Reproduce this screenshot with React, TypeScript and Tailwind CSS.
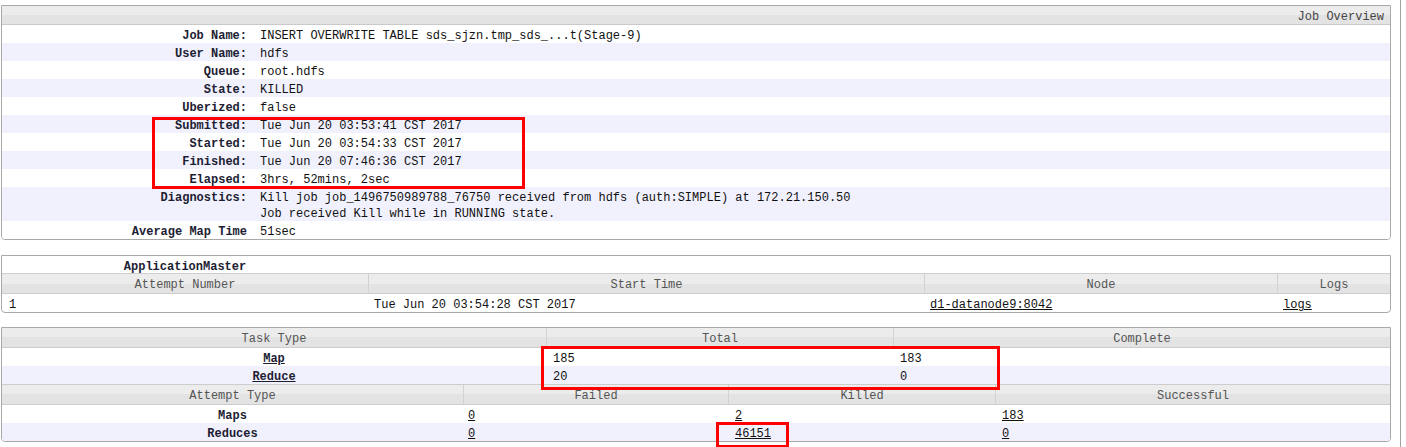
import React from 'react';

type Info = { label: string; value: React.ReactNode; lines?: number };

const info: Info[] = [
    { label: 'Job Name:', value: 'INSERT OVERWRITE TABLE sds_sjzn.tmp_sds_...t(Stage-9)' },
    { label: 'User Name:', value: 'hdfs' },
    { label: 'Queue:', value: 'root.hdfs' },
    { label: 'State:', value: 'KILLED' },
    { label: 'Uberized:', value: 'false' },
    { label: 'Submitted:', value: 'Tue Jun 20 03:53:41 CST 2017' },
    { label: 'Started:', value: 'Tue Jun 20 03:54:33 CST 2017' },
    { label: 'Finished:', value: 'Tue Jun 20 07:46:36 CST 2017' },
    { label: 'Elapsed:', value: '3hrs, 52mins, 2sec' },
    {
        label: 'Diagnostics:',
        value: (
            <>
                <div>Kill job job_1496750989788_76750 received from hdfs (auth:SIMPLE) at 172.21.150.50</div>
                <div>Job received Kill while in RUNNING state.</div>
            </>
        ),
        lines: 2,
    },
    { label: 'Average Map Time', value: '51sec' },
];

const headBg = 'bg-[linear-gradient(#ececec_0%,#ececec_50%,#e3e3e3_50%,#e3e3e3_100%)]';

function HeadCell({ children, w, first }: { children: React.ReactNode; w: string; first?: boolean }) {
    return (
        <div
            className={`${w} ${headBg} ${first ? '' : 'border-l border-[#d2d2d2]'} h-[19px] pt-[4px] text-center text-[12px] leading-[15px] text-[#555]`}
        >
            {children}
        </div>
    );
}

function Cell({ children, w, className = '' }: { children?: React.ReactNode; w: string; className?: string }) {
    return <div className={`${w} h-[18px] pt-[4px] leading-[14px] ${className}`}>{children}</div>;
}

function Panel({ children, className = '' }: { children: React.ReactNode; className?: string }) {
    return (
        <div className={`w-[1390px] overflow-hidden rounded-b-[4px] border border-[#a9a9a9] ${className}`}>{children}</div>
    );
}

function Box({ className }: { className: string }) {
    return <div className={`pointer-events-none absolute border-[3px] border-[#ff0000] ${className}`} />;
}

export default function App() {
    return (
        <div className="relative h-[447px] w-[1406px] overflow-hidden bg-white font-['Liberation_Mono',monospace] text-[12px] text-[#111]">
            <div className="h-full w-[1401px] border-r border-[#a3a3a3] pl-[1px] pt-[5px]">
                {/* Job overview */}
                <Panel>
                    <div className={`${headBg} h-[19px] border-b border-[#c9c9c9] pr-[6px] pt-[4px] text-right leading-[14px] text-[#444]`}>
                        Job Overview
                    </div>
                    {info.map((row, i) => (
                        <div
                            key={row.label}
                            className={`flex ${row.lines ? 'h-[34px] pt-[3px] leading-[16px]' : 'h-[18px] pt-[4px] leading-[14px]'} ${i % 2 ? 'bg-[#f1f1fe]' : 'bg-white'}`}
                        >
                            <div className="w-[251px] shrink-0 pr-[6px] text-right font-bold text-[#1d1d33]">{row.label}</div>
                            <div className="pl-[7px]">{row.value}</div>
                        </div>
                    ))}
                </Panel>

                {/* ApplicationMaster */}
                <Panel className="mt-[15px]">
                    <div className="flex h-[17px] pt-[4px] leading-[14px]">
                        <div className="w-[366px] text-center font-bold text-[#1d1d33]">ApplicationMaster</div>
                    </div>
                    <div className="flex border-y border-[#cdcdcd]">
                        <HeadCell w="w-[366px]" first>Attempt Number</HeadCell>
                        <HeadCell w="w-[556px]">Start Time</HeadCell>
                        <HeadCell w="w-[353px]">Node</HeadCell>
                        <HeadCell w="flex-1">Logs</HeadCell>
                    </div>
                    <div className="flex">
                        <Cell w="w-[366px]" className="pl-[7px]">1</Cell>
                        <Cell w="w-[556px]" className="pl-[6px]">Tue Jun 20 03:54:28 CST 2017</Cell>
                        <Cell w="w-[353px]" className="pl-[6px]"><span className="underline">d1-datanode9:8042</span></Cell>
                        <Cell w="flex-1" className="pl-[6px]"><span className="underline">logs</span></Cell>
                    </div>
                </Panel>

                {/* Tasks and attempts */}
                <Panel className="mt-[14px]">
                    <div className="flex border-b border-[#cdcdcd]">
                        <HeadCell w="w-[544px]" first>Task Type</HeadCell>
                        <HeadCell w="w-[347px]">Total</HeadCell>
                        <HeadCell w="flex-1">Complete</HeadCell>
                    </div>
                    <div className="flex bg-white">
                        <Cell w="w-[544px]" className="text-center font-bold text-[#1d1d33]"><span className="underline">Map</span></Cell>
                        <Cell w="w-[347px]" className="pl-[7px]">185</Cell>
                        <Cell w="flex-1" className="pl-[7px]">183</Cell>
                    </div>
                    <div className="flex bg-[#f1f1fe]">
                        <Cell w="w-[544px]" className="text-center font-bold text-[#1d1d33]"><span className="underline">Reduce</span></Cell>
                        <Cell w="w-[347px]" className="pl-[7px]">20</Cell>
                        <Cell w="flex-1" className="pl-[7px]">0</Cell>
                    </div>
                    <div className="flex border-y border-[#cdcdcd]">
                        <HeadCell w="w-[461px]" first>Attempt Type</HeadCell>
                        <HeadCell w="w-[265px]">Failed</HeadCell>
                        <HeadCell w="w-[267px]">Killed</HeadCell>
                        <HeadCell w="flex-1">Successful</HeadCell>
                    </div>
                    <div className="flex bg-white">
                        <Cell w="w-[461px]" className="text-center font-bold text-[#1d1d33]">Maps</Cell>
                        <Cell w="w-[265px]" className="pl-[5px]"><span className="underline">0</span></Cell>
                        <Cell w="w-[267px]" className="pl-[7px]"><span className="underline">2</span></Cell>
                        <Cell w="flex-1" className="pl-[7px]"><span className="underline">183</span></Cell>
                    </div>
                    <div className="flex bg-[#f1f1fe]">
                        <Cell w="w-[461px]" className="text-center font-bold text-[#1d1d33]">Reduces</Cell>
                        <Cell w="w-[265px]" className="pl-[5px]"><span className="underline">0</span></Cell>
                        <Cell w="w-[267px]" className="pl-[7px]"><span className="underline">46151</span></Cell>
                        <Cell w="flex-1" className="pl-[7px]"><span className="underline">0</span></Cell>
                    </div>
                </Panel>
            </div>

            {/* annotation boxes */}
            <Box className="left-[152px] top-[117px] h-[72px] w-[373px]" />
            <Box className="left-[541px] top-[346px] h-[44px] w-[459px]" />
            <Box className="left-[716px] top-[422px] h-[26px] w-[73px]" />
        </div>
    );
}
